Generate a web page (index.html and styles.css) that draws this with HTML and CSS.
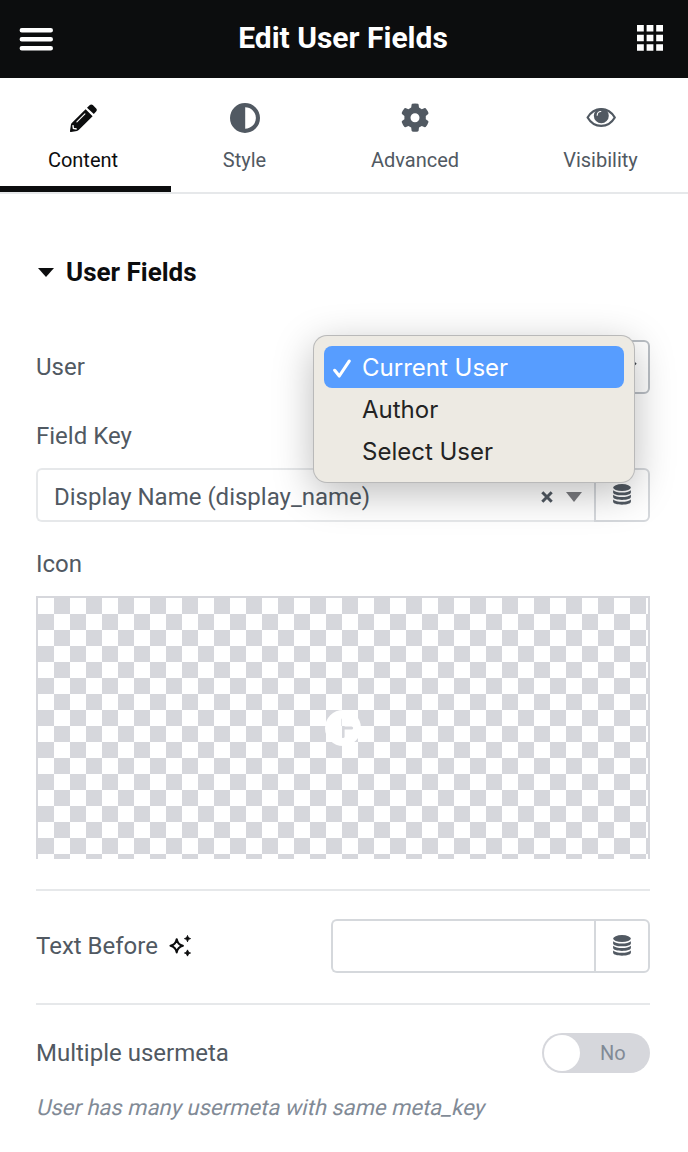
FILE: index.html
```html
<!DOCTYPE html>
<html lang="en">
<head>
    <meta charset="UTF-8">
    <meta name="viewport" content="width=device-width, initial-scale=1.0">
    <title>Edit User Fields</title>
    <link rel="stylesheet" href="styles.css">
</head>
<body>
    <svg class="sprite">
        <symbol id="icon-database" viewBox="0 0 18 21">
            <ellipse cx="9" cy="3.6" rx="8.9" ry="3.5"/>
            <path d="M.1 6.2c2 1.6 5 2.3 8.9 2.3s6.900-.7 8.900-2.300v2.200c0 1.700-4 2.900-8.900 2.900s-8.900-1.200-8.900-2.900z"/>
            <path d="M.1 10.800c2 1.600 5 2.300 8.900 2.300s6.900-.7 8.900-2.300v2.200c0 1.700-4 2.900-8.900 2.900s-8.900-1.200-8.900-2.900z"/>
            <path d="M.1 15.400c2 1.600 5 2.300 8.900 2.300s6.900-.7 8.900-2.300v2.400c0 1.700-4 2.900-8.900 2.900s-8.900-1.200-8.900-2.900z"/>
        </symbol>
    </svg>

    <header class="header">
        <svg class="menu-icon" width="34" height="24" viewBox="0 0 34 24">
            <path d="M2.800 2.200h29M2.800 11.200h29M2.800 20.200h29" stroke="#fff" stroke-width="4.400" stroke-linecap="round"/>
        </svg>
        <h1>Edit User Fields</h1>
        <svg class="apps-icon" width="26" height="26" viewBox="0 0 26 26">
            <path fill="#fff" d="M0 0h6.800v6.500H0zM9.600 0h6.800v6.500H9.600zM19.200 0H26v6.500h-6.800zM0 9.700h6.800v6.500H0zM9.600 9.700h6.800v6.500H9.600zM19.200 9.700H26v6.500h-6.800zM0 19.300h6.800v6.500H0zM9.600 19.300h6.800v6.500H9.600zM19.200 19.300H26v6.500h-6.800z"/>
        </svg>
    </header>

    <nav class="tabs">
        <div class="tab active">
            <svg width="30" height="30" viewBox="0 0 30 30">
                <path fill="currentColor" d="M17.600 6.200l7 7L10.700 27c-.5.500-1 .8-1.700.9l-6 1c-.7.100-1.100-.3-1-1l.9-6.100c.1-.7.400-1.200.9-1.700z"/>
                <path fill="currentColor" d="M19 4.800l2.600-2.600c1-1 2.300-1 3.200-.1l3.400 3.400c.9.900.8 2.100-.1 3.100l-2.300 2.500z"/>
                <path fill="none" stroke="#fff" stroke-width="1.100" stroke-linecap="round" d="M8.900 18.900l8-8"/>
                <path fill="none" stroke="#fff" stroke-width="1.400" d="M4.900 22.200l.5 3.300 3.300.5"/>
            </svg>
            <span>Content</span>
        </div>
        <div class="tab">
            <svg width="30" height="30" viewBox="0 0 30 30">
                <path fill="currentColor" fill-rule="evenodd" d="M15 0a15 15 0 1 0 0 30a15 15 0 0 0 0-30zM15.200 4.300a10.700 10.700 0 0 1 0 21.400z"/>
            </svg>
            <span>Style</span>
        </div>
        <div class="tab">
            <svg width="30" height="30" viewBox="0 0 30 30">
                <path fill="currentColor" fill-rule="evenodd" d="M12.200.8q2.800-.6 5.800 0l.6.700.4 3.100 2.800 1.600 2.900-1.200 1 .2q1.900 2.200 2.800 4.900l-.3 1-2.400 1.800v3.400l2.400 1.800.3 1q-.9 2.800-2.800 4.900l-1 .2-2.900-1.200-2.800 1.600-.4 3.100-.6.700q-3 .6-5.800 0l-.6-.7-.4-3.100L8.400 23l-2.900 1.200-1-.2q-1.900-2.100-2.800-4.900l.3-1 2.400-1.800v-3.400L2 11.100l-.3-1q.9-2.700 2.800-4.900l1-.2 2.900 1.200 2.800-1.600.4-3.100zM15 10.200a4.500 4.500 0 1 0 0 9a4.500 4.500 0 0 0 0-9z"/>
            </svg>
            <span>Advanced</span>
        </div>
        <div class="tab">
            <svg width="30" height="30" viewBox="0 0 30 30">
                <path fill="none" stroke="currentColor" stroke-width="2.200" stroke-linejoin="round" d="M1.600 14.500C4.800 9 9.700 6.100 15.200 6.100s10.400 2.900 13.600 8.400c-3.200 5.500-8.100 8.400-13.600 8.400S4.800 20 1.600 14.500z"/>
                <circle cx="15.300" cy="12.800" r="7.500" fill="currentColor"/>
                <path fill="none" stroke="#fff" stroke-width="1.100" stroke-linecap="round" d="M11.200 12.200c.1-2 1.500-3.600 3.600-3.700"/>
            </svg>
            <span>Visibility</span>
        </div>
    </nav>

    <main class="panel">
        <div class="section-title">
            <i class="caret"></i>
            <h2>User Fields</h2>
        </div>

        <div class="control user-control">
            <label>User</label>
            <div class="select">
                <svg class="chevron" width="14" height="8" viewBox="0 0 14 8">
                    <path d="M1 1l6 5.500L13 1" fill="none" stroke="#3f444b" stroke-width="2"/>
                </svg>
                <ul class="dropdown">
                    <li class="selected">
                        <svg width="20" height="20" viewBox="0 0 20 20">
                            <path d="M2.700 11.300l4.600 5.700L17.200 2.100" fill="none" stroke="#fff" stroke-width="3.100" stroke-linecap="round" stroke-linejoin="round"/>
                        </svg>
                        Current User
                    </li>
                    <li>Author</li>
                    <li>Select User</li>
                </ul>
            </div>
        </div>

        <label class="block-label">Field Key</label>
        <div class="field-group">
            <div class="field-value">
                <span>Display Name (display_name)</span>
                <svg class="clear" width="12" height="12" viewBox="0 0 12 12">
                    <path d="M1.300 1.300l9.400 9.400M10.700 1.300l-9.400 9.400" stroke="#515962" stroke-width="3"/>
                </svg>
                <i class="arrow"></i>
            </div>
            <div class="dynamic"><svg><use href="#icon-database"/></svg></div>
        </div>

        <label class="block-label icon-label">Icon</label>
        <div class="media">
            <svg width="36" height="36" viewBox="0 0 36 36">
                <path fill="#fff" fill-rule="evenodd" d="M18 0a18 18 0 1 0 0 36a18 18 0 0 0 0-36zM16.400 9.500a1.600 1.600 0 0 1 3.200 0v6.900h6.900a1.600 1.600 0 0 1 0 3.200h-6.900v6.900a1.600 1.600 0 0 1-3.200 0v-6.900H9.500a1.600 1.600 0 0 1 0-3.200h6.900z"/>
            </svg>
        </div>

        <div class="control text-control">
            <label>Text Before</label>
            <svg class="ai-icon" width="24" height="24" viewBox="0 0 24 24">
                <path fill="none" stroke="#0c0d0e" stroke-width="2.100" stroke-linejoin="round" d="M8.700 5.200c.8 4.200 2.200 5.800 6.200 6.600-4 .8-5.400 2.600-6.200 6.600-.8-4-2.200-5.800-6.200-6.600 4-.8 5.400-2.400 6.200-6.600z"/>
                <path fill="#0c0d0e" d="M19.500 1.500c.6 2 1.300 2.500 3 3.100-1.700.6-2.400 1.100-3 3.100-.6-2-1.300-2.500-3-3.100 1.700-.6 2.400-1.100 3-3.100zM19.500 15.900c.6 2 1.300 2.500 3 3.100-1.700.6-2.400 1.100-3 3.100-.6-2-1.300-2.500-3-3.100 1.700-.6 2.400-1.100 3-3.100z" stroke="#0c0d0e" stroke-width="1"/>
            </svg>
            <div class="field-group text-group">
                <input type="text">
                <div class="dynamic"><svg><use href="#icon-database"/></svg></div>
            </div>
        </div>

        <div class="control switch-control">
            <label>Multiple usermeta</label>
            <div class="switch"><i class="knob"></i><span>No</span></div>
        </div>
        <p class="description">User has many usermeta with same meta_key</p>
    </main>
</body>
</html>
```

FILE: styles.css
```css
:root {
    --black: #0c0d0e;
    --text: #515962;
    --muted: #818a96;
    --border: #d5d8dc;
    --light-border: #e6e8ea;
    --checker: #d6d7dc;
}

* {
    margin: 0;
    padding: 0;
    box-sizing: border-box;
}

body {
    background: #fff;
    font-family: Roboto, "Liberation Sans", sans-serif;
    font-size: 24px;
    line-height: 28px;
    color: var(--text);
    overflow: hidden;
}

svg {
    display: block;
    flex: none;
}

.sprite {
    display: none;
}

.header {
    display: flex;
    align-items: center;
    justify-content: space-between;
    height: 78px;
    padding: 0 25px 2px 19px;
    background: var(--black);
}

.header h1 {
    margin-right: 4px;
    color: #fff;
    font-size: 30px;
    font-weight: 700;
}

.menu-icon {
    margin-top: 3px;
}

.tabs {
    display: grid;
    grid-template-columns: 171px 147px 194px 177px;
    height: 116px;
    border-bottom: 2px solid var(--light-border);
}

.tab {
    display: flex;
    flex-direction: column;
    align-items: center;
    gap: 13px;
    padding-top: 25px;
    font-size: 20px;
}

.tab.active {
    padding-right: 5px;
    color: var(--black);
    border-bottom: 6px solid var(--black);
}

.panel {
    padding: 64px 38px 0 36px;
}

.section-title {
    display: flex;
    align-items: center;
    gap: 12px;
    padding-left: 2px;
    margin-bottom: 54px;
    color: var(--black);
}

.section-title h2 {
    font-size: 26px;
    font-weight: 700;
}

.caret {
    border: 8px solid transparent;
    border-top: 9px solid var(--black);
    border-bottom: 0;
}

.control {
    display: flex;
    align-items: center;
}

.select {
    position: relative;
    display: flex;
    align-items: center;
    justify-content: flex-end;
    width: 319px;
    height: 54px;
    margin-left: auto;
    padding: 0 11px 3px 0;
    border: 2px solid #babfc5;
    border-radius: 6px;
}

.dropdown {
    position: absolute;
    top: -6px;
    left: -19px;
    width: 320px;
    padding: 10px;
    list-style: none;
    background: #edeae3;
    border-radius: 13px;
    box-shadow: 0 0 0 1px #b9b9b9, 0 10px 40px rgba(0, 0, 0, .28);
    font-family: Inter, sans-serif;
    font-size: 24px;
    color: #232323;
}

.dropdown li {
    display: flex;
    align-items: center;
    height: 42px;
    padding: 2px 0 0 38px;
    border-radius: 8px;
}

.dropdown .selected {
    gap: 10px;
    padding-left: 8px;
    background: #579dff;
    color: #fff;
}

.dropdown .selected svg {
    margin-top: 2px;
}

.block-label {
    display: block;
    margin: 28px 0 18px;
}

.field-group {
    display: flex;
    height: 54px;
}

.field-value {
    display: flex;
    flex: 1;
    align-items: center;
    padding: 3px 12px 0 16px;
    border: 2px solid var(--light-border);
    border-right: 0;
    border-radius: 6px 0 0 6px;
}

.clear {
    margin: 0 13px 0 auto;
}

.arrow {
    border: 8px solid transparent;
    border-top: 10px solid #7b7c80;
    border-bottom: 0;
}

.dynamic {
    display: flex;
    justify-content: center;
    align-items: center;
    width: 56px;
    padding: 0 1px 1px 0;
    border: 2px solid var(--border);
    border-radius: 0 6px 6px 0;
}

.dynamic svg {
    width: 18px;
    height: 21px;
    fill: var(--text);
}

.media {
    display: flex;
    justify-content: center;
    height: 263px;
    padding-top: 112px;
    border: 2px solid var(--checker);
    border-bottom: 0;
    background: conic-gradient(var(--checker) 25%, #fff 0 50%, var(--checker) 0 75%, #fff 0) 0 0 / 32px 32px;
}

.text-control {
    margin-top: 30px;
    padding: 28px 0 30px;
    border-top: 2px solid var(--light-border);
}

.ai-icon {
    margin-left: 10px;
}

.text-group {
    width: 319px;
    margin-left: auto;
}

.text-group input {
    flex: 1;
    min-width: 0;
    border: 2px solid var(--border);
    border-right: 0;
    border-radius: 6px 0 0 6px;
}

.switch-control {
    justify-content: space-between;
    padding-top: 28px;
    border-top: 2px solid var(--light-border);
}

.switch {
    display: flex;
    align-items: center;
    width: 108px;
    height: 40px;
    padding: 2px;
    border-radius: 20px;
    background: var(--checker);
    font-size: 20px;
    color: var(--muted);
}

.knob {
    width: 36px;
    height: 36px;
    margin-right: 20px;
    border-radius: 50%;
    background: #fff;
}

/* slanted upright face, keeps the regular letter widths */
.description {
    margin-top: 21px;
    font-size: 22px;
    color: var(--muted);
    transform: skewX(-13deg);
    transform-origin: 0 75%;
}
```
